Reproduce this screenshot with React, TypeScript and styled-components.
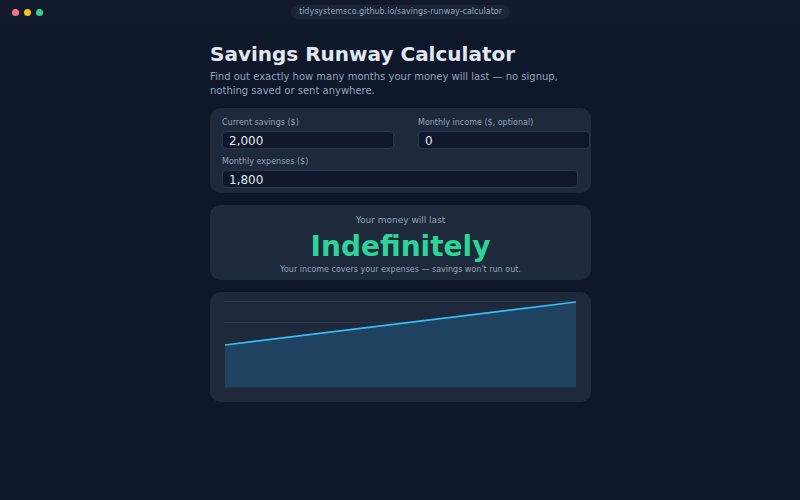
import React from "react";
import styled, { createGlobalStyle } from "styled-components";

const Global = createGlobalStyle`
  html, body { margin: 0; padding: 0; background: #0f172a; }
  body { font-family: "DejaVu Sans", sans-serif; width: 800px; height: 500px; overflow: hidden; }
`;
const Page = styled.div`
  width: 800px; height: 500px; background: #0f172a; display: flex; flex-direction: column;
`;
const TopBar = styled.header`
  height: 24px; flex: none; display: flex; align-items: center; position: relative; padding-left: 12px; gap: 5px;
  background: #121b2e; box-sizing: border-box;
`;
const Dot = styled.span<{ $c: string }>`
  width: 7px; height: 7px; border-radius: 50%; background: ${p => p.$c};
`;
const Url = styled.div`
  position: absolute; left: 291px; top: 5px; width: 219px; height: 14px; border-radius: 7px; background: #1a2538;
  color: #94a3b8; font-size: 8px; line-height: 14px; text-align: center; white-space: nowrap;
`;
const Main = styled.main`
  width: 381px; margin-left: 210px; padding-top: 17px; display: flex; flex-direction: column;
`;
const Title = styled.h1`
  margin: 0; font-size: 20px; line-height: 26px; font-weight: 700; color: #e2e8f0; white-space: nowrap;
`;
const Sub = styled.p`
  margin: 3px 0 0; font-size: 10px; line-height: 13.5px; color: #94a3b8; white-space: nowrap;
`;
const Card = styled.section`
  background: #1e293b; border-radius: 10px; box-sizing: border-box;
`;
const FormCard = styled(Card)`
  margin-top: 11px; height: 85px; padding: 9px 12px 0; display: grid;
  grid-template-columns: 172px 172px; column-gap: 24px; row-gap: 0; align-content: start;
`;
const Field = styled.label<{ $full?: boolean }>`
  display: flex; flex-direction: column; ${p => p.$full ? "grid-column: 1 / -1; width: 356px; margin-top: 7px;" : ""}
`;
const Label = styled.span`
  font-size: 8px; line-height: 11px; color: #94a3b8; white-space: nowrap;
`;
const Input = styled.input`
  margin-top: 3px; width: 100%; height: 18px; box-sizing: border-box; background: #0f172a; border: 1px solid #2a3650;
  border-radius: 4px; padding: 1px 6px 0; color: #e2e8f0; font: 12px "DejaVu Sans", sans-serif; outline: none;
`;
const ResultCard = styled(Card)`
  margin-top: 12px; height: 75px; padding-top: 10px; display: flex; flex-direction: column; align-items: center;
`;
const ResultLabel = styled.div`
  font-size: 9px; line-height: 11px; color: #94a3b8;
`;
const ResultValue = styled.div`
  font-size: 28px; line-height: 32px; margin-top: 5px; font-weight: 700; color: #2dd497;
`;
const ResultNote = styled.div`
  font-size: 8px; line-height: 11px; margin-top: 1px; color: #94a3b8; white-space: nowrap;
`;
const ChartCard = styled(Card)`
  margin-top: 12px; height: 110px; display: flex;
`;
const Chart = styled.svg`
  display: block; width: 381px; height: 110px;
`;

export default function App() {
  return (
    <Page>
      <Global />
      <TopBar>
        <Dot $c="#fb7185" /><Dot $c="#fac215" /><Dot $c="#2dd497" />
        <Url>tidysystemsco.github.io/savings-runway-calculator</Url>
      </TopBar>
      <Main>
        <Title>Savings Runway Calculator</Title>
        <Sub>Find out exactly how many months your money will last — no signup,<br />nothing saved or sent anywhere.</Sub>
        <FormCard>
          <Field><Label>Current savings ($)</Label><Input readOnly value="2,000" /></Field>
          <Field><Label>Monthly income ($, optional)</Label><Input readOnly value="0" /></Field>
          <Field $full><Label>Monthly expenses ($)</Label><Input readOnly value="1,800" /></Field>
        </FormCard>
        <ResultCard>
          <ResultLabel>Your money will last</ResultLabel>
          <ResultValue>Indefinitely</ResultValue>
          <ResultNote>Your income covers your expenses — savings won't run out.</ResultNote>
        </ResultCard>
        <ChartCard>
          <Chart viewBox="0 0 381 110">
            <line x1="14" x2="366" y1="9.5" y2="9.5" stroke="#2b3648" strokeWidth="1" />
            <line x1="14" x2="366" y1="30.5" y2="30.5" stroke="#2b3648" strokeWidth="1" />
            <path d="M15 53 L366 10 L366 95.5 L15 95.5 Z" fill="#1e425f" />
            <path d="M15 53 L366 10" fill="none" stroke="#38bdf8" strokeWidth="1.7" />
          </Chart>
        </ChartCard>
      </Main>
    </Page>
  );
}
